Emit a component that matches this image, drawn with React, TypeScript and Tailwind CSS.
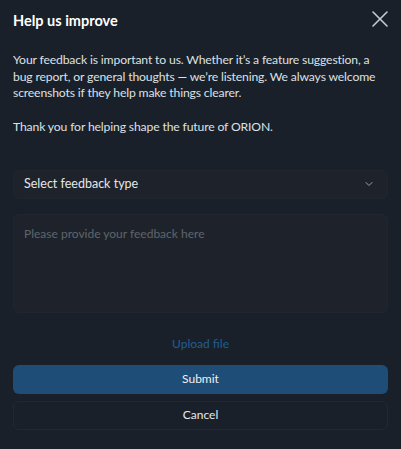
import { ChevronDown, X } from 'lucide-react';

export default function App() {
    return (
        <div className="w-[401px] h-[449px] bg-[#19202a] text-[#e6e8eb] px-[13px] pt-[10px] font-['Lato',sans-serif]">
            <div className="flex items-center justify-between h-[22px]">
                <h1 className="text-[14.5px] font-bold text-white">Help us improve</h1>
                <X className="w-[28px] h-[28px] text-[#c5c9cf] -mr-[6px] -mt-[4px]" strokeWidth={1.4} />
            </div>

            <div className="mt-[20px] text-[12.2px] leading-[16.7px] tracking-[-0.15px] text-[#dde0e4] whitespace-nowrap">
                <p>
                    Your feedback is important to us. Whether it’s a feature suggestion, a<br />
                    bug report, or general thoughts — we’re listening. We always welcome<br />
                    screenshots if they help make things clearer.
                </p>
                <p className="mt-[17px]">Thank you for helping shape the future of ORION.</p>
            </div>

            <div className="mt-[34px] h-[29px] rounded-md bg-[#1e232b] border border-[#21262e] flex items-center justify-between pl-[10px] pr-[12px]">
                <span className="text-[12.5px] text-[#e4e6e9]">Select feedback type</span>
                <ChevronDown className="w-[12px] h-[12px] text-[#9aa0a8]" strokeWidth={2} />
            </div>

            <div className="mt-[15px] h-[99px] rounded-md bg-[#1e232b] border border-[#21262e] px-[10px] pt-[5px]">
                <span className="text-[12px] text-[#5f656d]">Please provide your feedback here</span>
            </div>

            <div className="mt-[22px] text-center text-[12px] font-medium text-[#1f5a8c]">Upload file</div>

            <div className="mt-[12px] h-[29px] rounded-md bg-[#1e4d77] flex items-center justify-center text-[12px] text-[#eef1f4]">
                Submit
            </div>
            <div className="mt-[7px] h-[29px] rounded-md border border-[#232830] flex items-center justify-center text-[12px] text-[#e6e8eb]">
                Cancel
            </div>
        </div>
    );
}
